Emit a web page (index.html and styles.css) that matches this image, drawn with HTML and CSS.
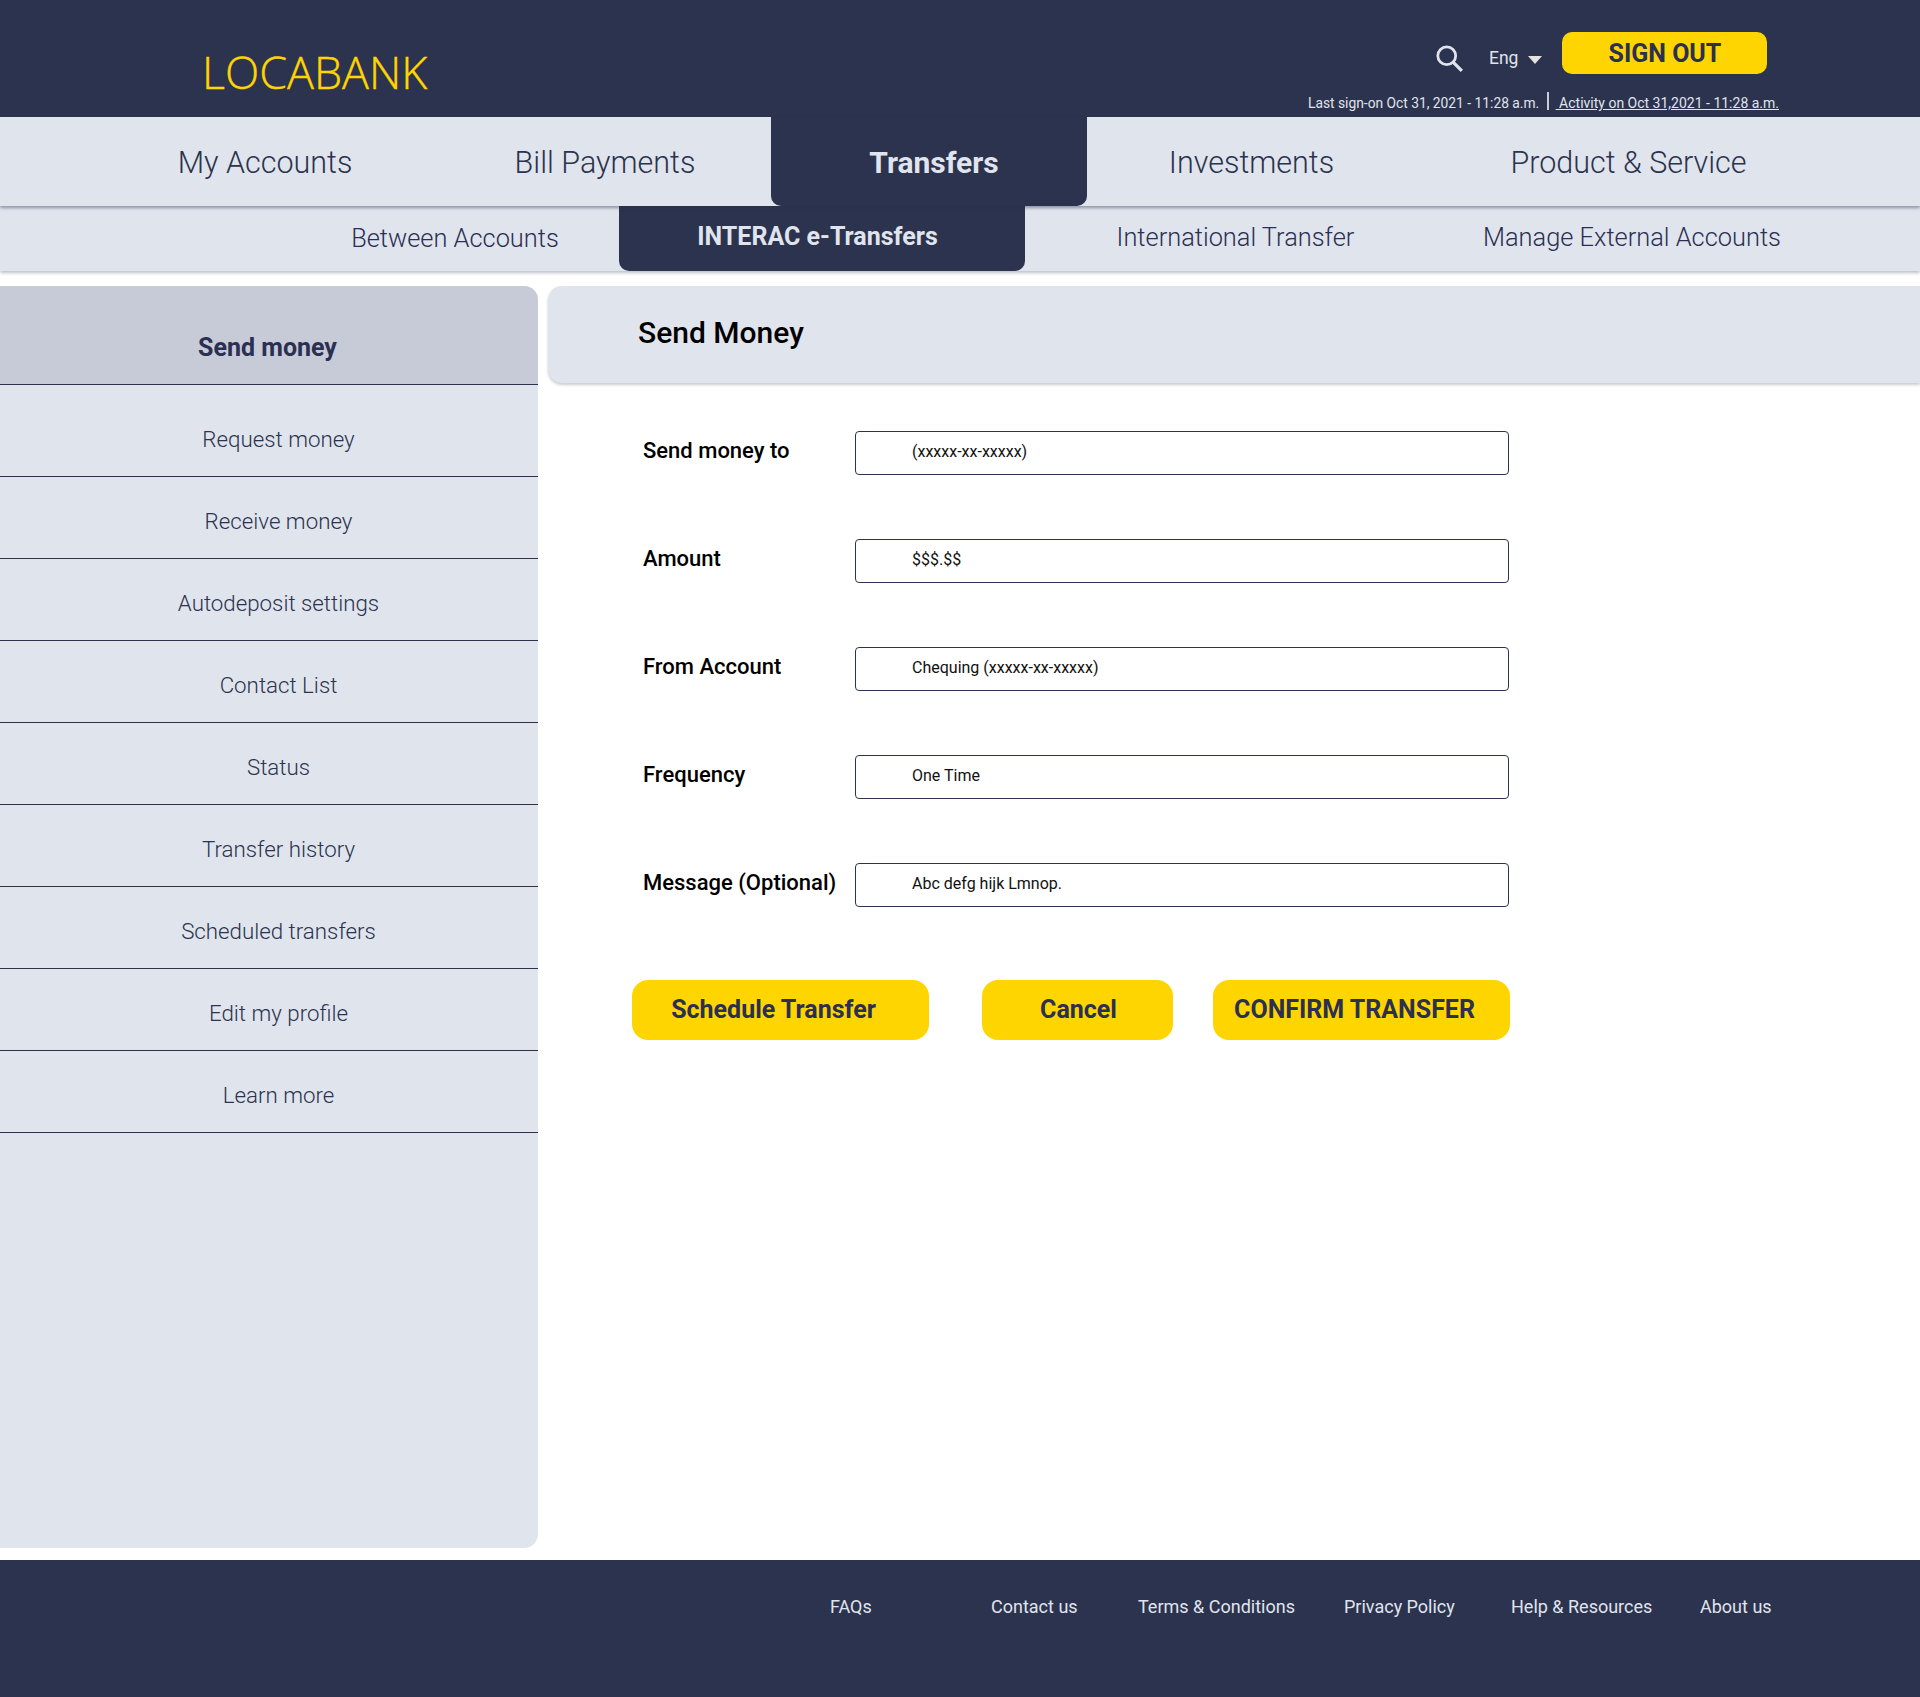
FILE: index.html
```html
<!DOCTYPE html>
<html lang="en">
<head>
  <meta charset="UTF-8">
  <title>Locabank - Send Money</title>
  <link rel="stylesheet" href="styles.css">
</head>
<body>

<header class="top">
  <div class="logo">LOCABANK</div>
  <div class="top-right">
    <div class="top-tools">
      <svg class="search" width="33" height="33" viewBox="0 0 24 24" fill="none" stroke="#e0e4ed" stroke-width="2">
        <circle cx="10" cy="10" r="6.5"/>
        <path d="M14.8 14.8 L21 21" stroke-width="2.4"/>
      </svg>
      <span class="lang">Eng</span>
      <span class="caret"></span>
      <a class="signout">SIGN OUT</a>
    </div>
    <div class="signon">
      <span>Last sign-on Oct 31, 2021 - 11:28 a.m.</span>
      <span class="sep"></span>
      <a>&nbsp;Activity on Oct 31,2021 - 11:28 a.m.</a>
    </div>
  </div>
</header>

<nav class="mainnav">
  <a class="m1">My Accounts</a>
  <a class="m2">Bill Payments</a>
  <a class="m3 active">Transfers</a>
  <a class="m4">Investments</a>
  <a class="m5">Product &amp; Service</a>
</nav>

<nav class="subnav">
  <a class="s1">Between Accounts</a>
  <a class="s2 active">INTERAC e-Transfers</a>
  <a class="s3">International Transfer</a>
  <a class="s4">Manage External Accounts</a>
</nav>

<div class="page">
  <aside class="side">
    <div class="side-head">Send money</div>
    <a>Request money</a>
    <a>Receive money</a>
    <a>Autodeposit settings</a>
    <a>Contact List</a>
    <a>Status</a>
    <a>Transfer history</a>
    <a>Scheduled transfers</a>
    <a>Edit my profile</a>
    <a>Learn more</a>
  </aside>

  <main class="content">
    <h1>Send Money</h1>
    <form class="form">
      <div class="row"><label>Send money to</label><div class="field">(xxxxx-xx-xxxxx)</div></div>
      <div class="row"><label>Amount</label><div class="field">$$$.$$</div></div>
      <div class="row"><label>From Account</label><div class="field">Chequing (xxxxx-xx-xxxxx)</div></div>
      <div class="row"><label>Frequency</label><div class="field">One Time</div></div>
      <div class="row"><label>Message (Optional)</label><div class="field">Abc defg hijk Lmnop.</div></div>
      <div class="buttons">
        <button type="button" class="b1">Schedule Transfer</button>
        <button type="button" class="b2">Cancel</button>
        <button type="button" class="b3">CONFIRM TRANSFER</button>
      </div>
    </form>
  </main>
</div>

<footer class="foot">
  <a class="f1">FAQs</a>
  <a class="f2">Contact us</a>
  <a class="f3">Terms &amp; Conditions</a>
  <a class="f4">Privacy Policy</a>
  <a class="f5">Help &amp; Resources</a>
  <a class="f6">About us</a>
</footer>

</body>
</html>
```

FILE: styles.css
```css
* {
  box-sizing: border-box;
}
body {
  margin: 0;
  width: 1920px;
  height: 1697px;
  overflow: hidden;
  background: #fff;
  font-family: Roboto, Arial, sans-serif;
  color: #2b334e;
}
.top {
  height: 117px;
  background: #2b334e;
  display: flex;
  justify-content: space-between;
}
.logo {
  margin: 45px 0 0 202px;
  font-family: "Open Sans", sans-serif;
  font-weight: 300;
  font-size: 44.8px;
  line-height: 54px;
  color: #ffd500;
  -webkit-text-stroke: 0.4px #ffd500;
}
.top-right {
  width: 480px;
  margin-right: 141px;
  padding-top: 32px;
}
.top-tools {
  display: flex;
  align-items: center;
  height: 42px;
  padding-left: 134px;
}
.search {
  margin-top: 10px;
}
.lang {
  margin-left: 23px;
  margin-top: 10px;
  font-size: 17.5px;
  color: #e0e4ed;
}
.caret {
  margin: 14px 20px 0 10px;
  border-left: 7.5px solid transparent;
  border-right: 7.5px solid transparent;
  border-top: 8px solid #e6e2e4;
}
.signout {
  width: 205px;
  height: 42px;
  border-radius: 10px;
  background: #ffd500;
  text-align: center;
  font-size: 25px;
  font-weight: 700;
  line-height: 44px;
  color: #2b2f52;
}
.signon {
  display: flex;
  align-items: center;
  margin-top: 20px;
  padding-left: 9px;
  height: 18px;
  font-size: 13.8px;
  color: #e0e4ed;
  white-space: nowrap;
}
.signon a {
  font-size: 14px;
  text-decoration: underline;
}
.sep {
  width: 2px;
  height: 18px;
  margin: -4px 7px 0 8px;
  background: #c9cdd8;
}
.mainnav {
  position: relative;
  z-index: 2;
  height: 89px;
  display: flex;
  padding-left: 100px;
  background: #e0e4ed;
  box-shadow: 0 2px 3px rgba(43, 51, 78, 0.45);
  font-size: 30.5px;
  font-weight: 300;
}
.mainnav a {
  display: block;
  text-align: center;
  line-height: 92px;
  color: #2b334e;
}
.m1 { width: 330px; }
.m2 { width: 341px; padding-left: 9px; }
.m3 { width: 316px; padding-left: 10px; }
.m4 { width: 328px; padding-left: 1px; }
.m5 { width: 426px; padding-left: 1px; }
.mainnav .active,
.subnav .active {
  background: #2b334e;
  color: #e0e4ed;
  font-weight: 700;
  border-radius: 0 0 10px 10px;
}
.mainnav .active {
  font-size: 30px;
}
.subnav {
  position: relative;
  z-index: 1;
  height: 65px;
  display: flex;
  padding-left: 289px;
  background: #e0e4ed;
  box-shadow: 0 2px 3px rgba(43, 51, 78, 0.3);
  font-size: 25.4px;
  font-weight: 300;
}
.subnav a {
  display: block;
  text-align: center;
  line-height: 64px;
  color: #2b2f52;
}
.subnav .active {
  padding-right: 9px;
  font-size: 25px;
  line-height: 62px;
}
.subnav .s3 {
  padding-left: 1px;
  line-height: 62px;
}
.subnav .s4 {
  line-height: 62px;
}
.s1 { width: 330px; padding-left: 2px; }
.s2 { width: 406px; }
.s3 { width: 420px; }
.s4 { width: 374px; }
.page {
  display: flex;
  margin-top: 15px;
  height: 1262px;
}
.side {
  width: 538px;
  background: #e0e4ed;
  border-radius: 0 14px 14px 0;
}
.side-head {
  height: 99px;
  padding: 47px 3px 0 0;
  background: #c7cbd8;
  border-top-right-radius: 14px;
  border-bottom: 1px solid #2b334e;
  text-align: center;
  font-size: 25px;
  font-weight: 700;
  color: #2b2f52;
}
.side a {
  display: block;
  height: 82px;
  padding-left: 19px;
  border-bottom: 1px solid #2b334e;
  text-align: center;
  font-size: 22.3px;
  font-weight: 300;
  line-height: 89px;
  color: #2b334e;
}
.side a:first-of-type {
  height: 92px;
  line-height: 108px;
}
.content {
  flex: 1;
  margin-left: 10px;
}
.content h1 {
  margin: 0;
  height: 97px;
  padding-left: 90px;
  background: #e0e4ed;
  border-top-left-radius: 14px;
  border-bottom-left-radius: 14px;
  box-shadow: 0 2px 3px rgba(0, 0, 0, 0.2);
  font-size: 30px;
  font-weight: 500;
  line-height: 94px;
  color: #000;
}
.form {
  padding: 48px 0 0 95px;
}
.row {
  display: flex;
  align-items: center;
  height: 44px;
  margin-bottom: 64px;
}
.row label {
  width: 212px;
  margin-top: -6px;
  font-size: 22px;
  font-weight: 500;
  color: #000;
  white-space: nowrap;
}
.field {
  width: 654px;
  height: 44px;
  padding-left: 56px;
  border: 1px solid #2b334e;
  border-radius: 4px;
  font-size: 16px;
  line-height: 40px;
  color: #111;
}
.buttons {
  display: flex;
  margin: 73px 0 0 -11px;
}
.buttons button {
  height: 60px;
  border: 0;
  border-radius: 16px;
  background: #ffd500;
  font-family: Roboto, Arial, sans-serif;
  font-size: 25px;
  font-weight: 700;
  color: #2b2f52;
  padding: 0 0 2px 0;
}
.buttons .b1 { width: 297px; padding-right: 14px; }
.buttons .b2 { width: 191px; margin-left: 53px; padding-left: 2px; }
.buttons .b3 { width: 297px; margin-left: 40px; padding-right: 14px; }
.foot {
  height: 137px;
  margin-top: 12px;
  display: flex;
  padding: 36px 0 0 830px;
  background: #2b334e;
  font-size: 18px;
  color: #e0e4ed;
}
.f1 { width: 161px; }
.f2 { width: 146px; }
.f3 { width: 207px; padding-left: 1px; }
.f4 { width: 167px; }
.f5 { width: 189px; }
```
